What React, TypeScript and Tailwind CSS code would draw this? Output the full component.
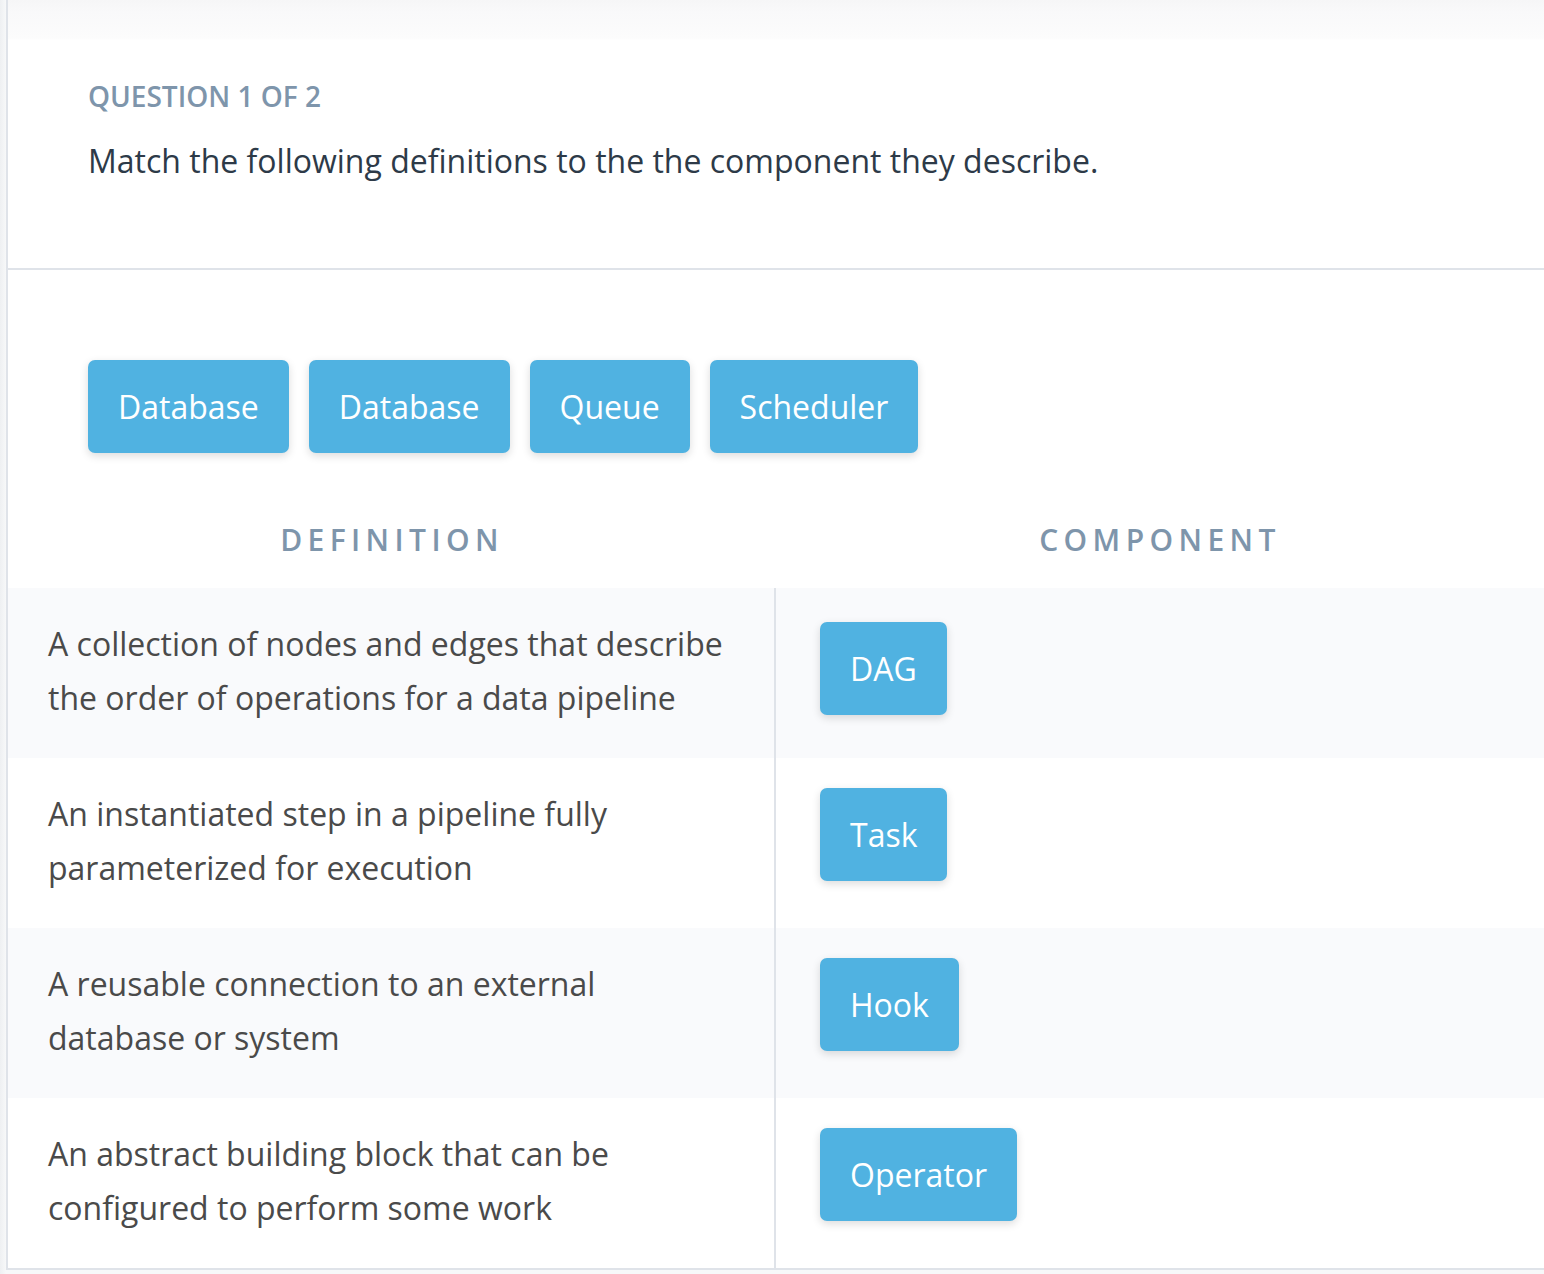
import React from 'react'

const choices = ['Database', 'Database', 'Queue', 'Scheduler']

const rows = [
    { lines: ['A collection of nodes and edges that describe', 'the order of operations for a data pipeline'], answer: 'DAG' },
    { lines: ['An instantiated step in a pipeline fully', 'parameterized for execution'], answer: 'Task' },
    { lines: ['A reusable connection to an external', 'database or system'], answer: 'Hook' },
    { lines: ['An abstract building block that can be', 'configured to perform some work'], answer: 'Operator' },
]

function Chip({ label }: { label: string }) {
    return (
        <div className="h-[93px] px-[30px] flex items-center rounded-[7px] bg-[#50b2e1] text-white text-[32px] leading-none shadow-[0_3px_8px_rgba(0,0,0,0.14)] select-none">
            {label}
        </div>
    )
}

export default function App() {
    return (
        <div className="min-h-[1274px] bg-[linear-gradient(to_right,#eef0f2,#f7f8f9_6px)] pl-[6px] pb-[4px] font-['Open_Sans',sans-serif]">
            <div className="bg-white border-l-2 border-b-2 border-[#dfe3e9]">
                {/* question header */}
                <div className="bg-[linear-gradient(to_bottom,#f6f6f7_0px,#f9f9fa_12px,#fcfcfc_38px,#ffffff_40px)] pl-[80px] pt-[77px] pb-[85px] border-b-2 border-[#dfe3e9]">
                    <div className="text-[28px] font-semibold text-[#7e95ab] leading-[38px]">QUESTION 1 OF 2</div>
                    <div className="mt-[24px] text-[32px] text-[#2d3a48] leading-[44px]">
                        Match the following definitions to the the component they describe.
                    </div>
                </div>

                {/* answer pool */}
                <div className="pl-[80px] pt-[90px] flex gap-[20px]">
                    {choices.map((c, i) => (
                        <Chip key={i} label={c} />
                    ))}
                </div>

                <div className="mt-[66px] mb-[28px] grid grid-cols-[768px_1fr] text-[30px] font-semibold tracking-[0.18em] text-[#7e95ab] leading-[41px]">
                    <div className="text-center">DEFINITION</div>
                    <div className="text-center">COMPONENT</div>
                </div>

                <div className="flex flex-col">
                    {rows.map((r, i) => (
                        <div key={i} className={`h-[170px] grid grid-cols-[768px_1fr] ${i % 2 === 0 ? 'bg-[#f9fafc]' : 'bg-white'}`}>
                            <div className="pl-[40px] pt-[29px] border-r-2 border-[#dfe3e9] text-[32px] leading-[54px] text-[#4a4a4a]">
                                {r.lines.map((l, j) => (
                                    <div key={j}>{l}</div>
                                ))}
                            </div>
                            <div className={`pl-[44px] flex items-start ${i === 0 ? 'pt-[34px]' : 'pt-[30px]'}`}>
                                <Chip label={r.answer} />
                            </div>
                        </div>
                    ))}
                </div>
            </div>
        </div>
    )
}
